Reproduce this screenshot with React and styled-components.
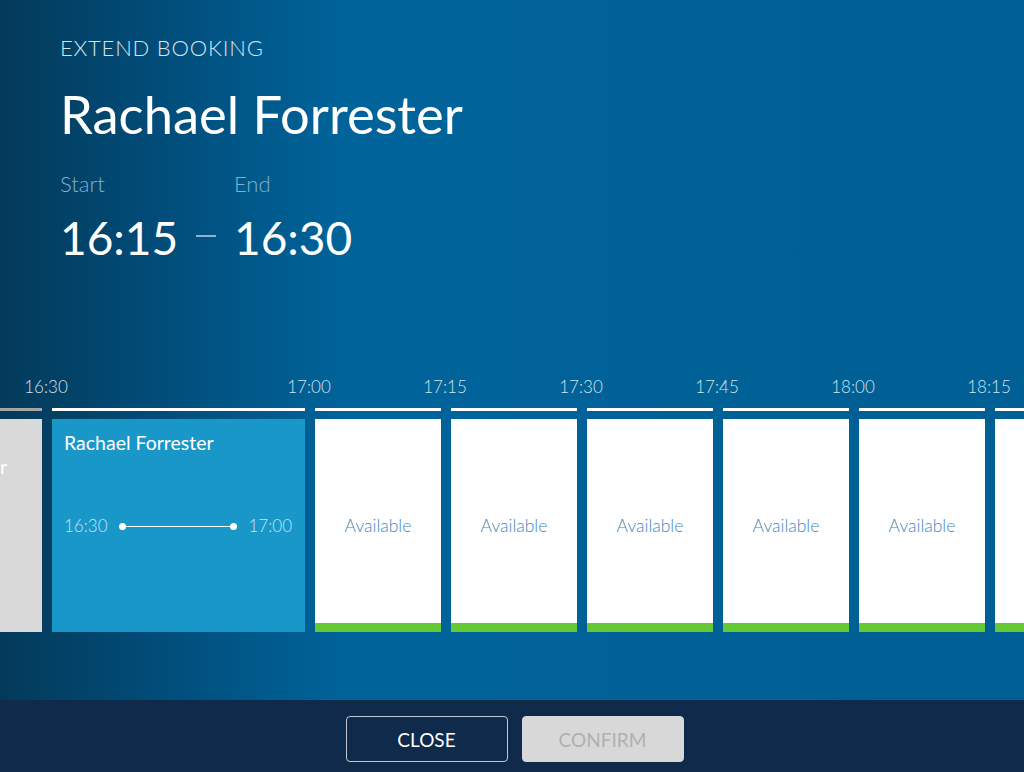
import React from 'react';
import styled, { createGlobalStyle } from 'styled-components';

const GlobalStyle = createGlobalStyle`
	html, body {
		margin: 0;
		padding: 0;
	}
	body {
		font-family: 'Lato', 'Open Sans', sans-serif;
		-webkit-font-smoothing: antialiased;
	}
	* {
		box-sizing: border-box;
	}
`;

const Page = styled.div`
	width: 1024px;
	height: 772px;
	display: flex;
	flex-direction: column;
	overflow: hidden;
	background: linear-gradient(90deg, #033a5a 0%, #014d7a 16%, #00649b 34%, #006298 60%, #005f95 100%);
`;

const Main = styled.main`
	flex: 1;
	display: flex;
	flex-direction: column;
	min-height: 0;
`;

const Header = styled.header`
	padding: 35px 60px 0;
	color: #fff;
`;

const Eyebrow = styled.div`
	font-size: 22px;
	font-weight: 300;
	line-height: 1.2;
	letter-spacing: 0.8px;
	color: #d6e4ee;
`;

const Name = styled.h1`
	margin: 20.6px 0 0;
	font-size: 52.5px;
	font-weight: 400;
	line-height: 1.2;
	color: #fff;
`;

const TimeGrid = styled.div`
	margin-top: 25.8px;
	display: grid;
	grid-template-columns: 136px 38px auto;
	row-gap: 13px;
	align-items: center;
`;

const TimeLabel = styled.div`
	font-size: 22px;
	font-weight: 300;
	line-height: 1.2;
	color: #7db1d3;
`;

const TimeValue = styled.div`
	font-size: 46px;
	font-weight: 400;
	line-height: 1.2;
	color: #fff;
`;

const Dash = styled.div`
	width: 20px;
	height: 1.5px;
	margin-top: -4px;
	background: #8cb3cf;
`;

const Timeline = styled.section`
	margin-top: 110px;
	display: flex;
	gap: 10px;
	margin-left: -211px;
`;

const Slot = styled.div`
	flex: none;
	width: ${(p) => p.$width}px;
	display: flex;
	flex-direction: column;
`;

const Tick = styled.div`
	height: 33px;
	padding-top: 2px;
	white-space: nowrap;
	font-size: 17px;
	font-weight: 300;
	line-height: 1.2;
	color: #d2e1ec;

	span {
		display: inline-block;
		transform: translateX(calc(-50% - 6px));
	}
`;

const Bar = styled.div`
	height: 3px;
	background: ${(p) => (p.$past ? '#a6a6a6' : '#ffffff')};
	margin-bottom: 8px;
`;

const PastCard = styled.div`
	height: 213px;
	background: #d9d9d9;
	padding: 36px 35px 0 0;
	text-align: right;
	font-size: 19.5px;
	line-height: 1.2;
	color: #fff;
	white-space: nowrap;
`;

const BookingCard = styled.div`
	height: 213px;
	background: #1a97c9;
	padding: 12px 13px 35px 12px;
	display: flex;
	flex-direction: column;
	color: #fff;
`;

const BookingTitle = styled.div`
	font-size: 19.5px;
	font-weight: 400;
	line-height: 1.2;
`;

const BookingRange = styled.div`
	flex: 1;
	display: flex;
	align-items: center;
	font-size: 17px;
	font-weight: 300;
	line-height: 1.2;
	color: #c4e3f2;
`;

const RangeLine = styled.div`
	flex: 1;
	height: 1px;
	margin: 0 14px;
	background: #fff;
	display: flex;
	align-items: center;
	justify-content: space-between;

	&::before,
	&::after {
		content: '';
		width: 7px;
		height: 7px;
		border-radius: 50%;
		background: #fff;
		margin: 0 -3px;
	}
`;

const AvailableCard = styled.div`
	height: 213px;
	background: #fff;
	box-shadow: inset 0 -9px 0 #64c935;
	display: flex;
	align-items: center;
	justify-content: center;
	font-size: 17.5px;
	font-weight: 300;
	line-height: 1.2;
	color: #3f87bc;
`;

const Footer = styled.footer`
	height: 72px;
	flex: none;
	background: #0f2a4b;
	display: flex;
	justify-content: center;
	gap: 14px;
	padding: 16px 0 0 5px;
`;

const Button = styled.button`
	width: 162px;
	height: 46px;
	border-radius: 4px;
	font-family: 'Lato', sans-serif;
	font-size: 19px;
	font-weight: 400;
	cursor: pointer;
	border: 1px solid ${(p) => (p.$primary ? '#d8d8d8' : 'rgba(255,255,255,0.75)')};
	background: ${(p) => (p.$primary ? '#d8d8d8' : 'transparent')};
	color: ${(p) => (p.$primary ? '#b0b0b0' : '#ffffff')};
`;

const available = ['17:00', '17:15', '17:30', '17:45', '18:00', '18:15', '18:30'];

export default function App() {
	return (
		<>
			<GlobalStyle />
			<Page>
				<Main>
					<Header>
						<Eyebrow>EXTEND BOOKING</Eyebrow>
						<Name>Rachael Forrester</Name>
						<TimeGrid>
							<TimeLabel>Start</TimeLabel>
							<div />
							<TimeLabel>End</TimeLabel>
							<TimeValue>16:15</TimeValue>
							<Dash />
							<TimeValue>16:30</TimeValue>
						</TimeGrid>
					</Header>
					<Timeline>
						<Slot $width={253}>
							<Tick>
								<span>16:00</span>
							</Tick>
							<Bar $past />
							<PastCard>Daniel Baxter</PastCard>
						</Slot>
						<Slot $width={253}>
							<Tick>
								<span>16:30</span>
							</Tick>
							<Bar />
							<BookingCard>
								<BookingTitle>Rachael Forrester</BookingTitle>
								<BookingRange>
									<span>16:30</span>
									<RangeLine />
									<span>17:00</span>
								</BookingRange>
							</BookingCard>
						</Slot>
						{available.map((t) => (
							<Slot key={t} $width={126}>
								<Tick>
									<span>{t}</span>
								</Tick>
								<Bar />
								<AvailableCard>Available</AvailableCard>
							</Slot>
						))}
					</Timeline>
				</Main>
				<Footer>
					<Button>CLOSE</Button>
					<Button $primary disabled>
						CONFIRM
					</Button>
				</Footer>
			</Page>
		</>
	);
}
